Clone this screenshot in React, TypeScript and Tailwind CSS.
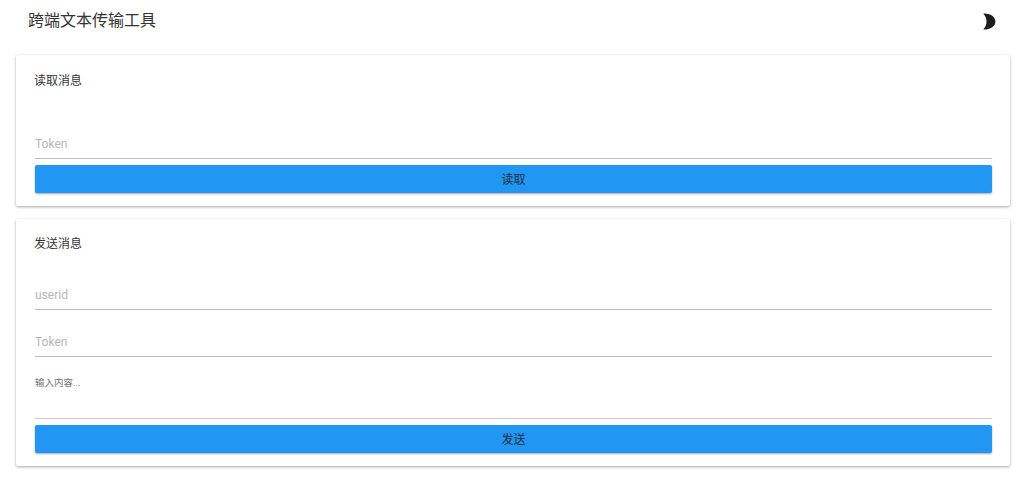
const font = "font-['Roboto','Noto_Sans_CJK_SC',sans-serif]";

function MoonIcon() {
  return (
    <svg width="13" height="17" viewBox="0 0 13 17" className="block">
      <path d="M.3.500C6 0 12.400 3 12.400 8.500S6 17 .3 16.500C2.500 14 3.500 11.500 3.500 8.500S2.500 3 .3.500Z" fill="#1d1d1d" />
    </svg>
  );
}

function Field({ placeholder, pad }: { placeholder: string; pad: string }) {
  return (
    <div className={`${pad} border-b border-[#bdbdbd] pb-[7px]`}>
      <input
        readOnly
        placeholder={placeholder}
        className="block h-[14px] w-full bg-transparent text-[12px] leading-[14px] outline-none placeholder:text-[#b5b5b5]"
      />
    </div>
  );
}

function ActionButton({ label }: { label: string }) {
  return (
    <button className="mt-[6px] block h-[28px] w-full rounded-[2px] bg-[#2196f3] pt-[1px] text-[12px] text-[#1f2f3d] shadow-[0_1px_2px_rgba(0,0,0,0.35)]">
      {label}
    </button>
  );
}

function Card({ title, top, children }: { title: string; top: string; children: React.ReactNode }) {
  return (
    <section className={`${top} rounded-[2px] bg-white pr-[18px] pb-[13px] pl-[19px] shadow-[0_1px_3px_rgba(0,0,0,0.35)]`}>
      <h2 className="-ml-[1px] text-[12px] leading-[14px] font-normal text-[#333333]">{title}</h2>
      {children}
    </section>
  );
}

export default function App() {
  return (
    <div className={`${font} min-h-[483px] bg-white`}>
      <header className="flex h-[42px] items-center justify-between pr-[28px] pl-[28px]">
        <h1 className="text-[16px] font-normal text-[#333333]">跨端文本传输工具</h1>
        <MoonIcon />
      </header>
      <main className="mt-[13px] ml-[16px] flex w-[994px] flex-col gap-[13px]">
        <Card title="读取消息" top="pt-[19px]">
          <Field placeholder="Token" pad="pt-[49px]" />
          <ActionButton label="读取" />
        </Card>
        <Card title="发送消息" top="pt-[18px]">
          <Field placeholder="userid" pad="pt-[37px]" />
          <Field placeholder="Token" pad="pt-[25px]" />
          <div className="border-b border-[#c8c8c8] pt-[20px] pb-[30px] text-[9.500px] leading-[11px] text-[#757575]">输入内容...</div>
          <ActionButton label="发送" />
        </Card>
      </main>
    </div>
  );
}
